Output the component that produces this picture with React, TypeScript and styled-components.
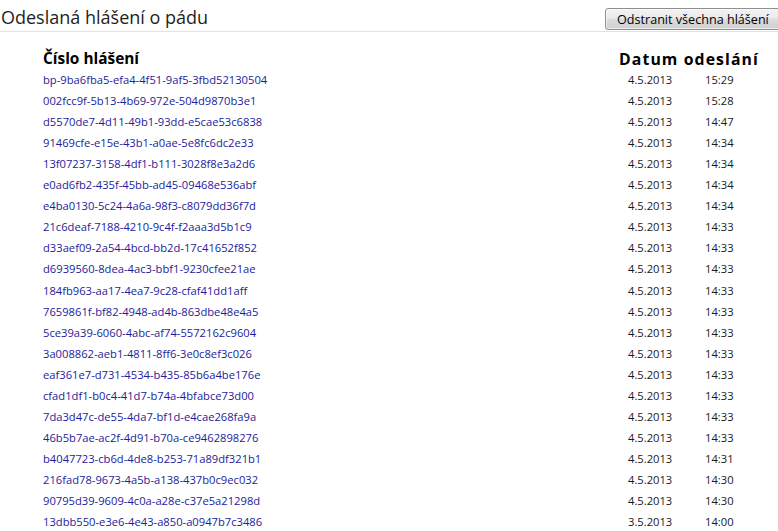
import React from "react";
import styled, { createGlobalStyle } from "styled-components";

const Global = createGlobalStyle`
  html, body { margin: 0; padding: 0; background: #ffffff; }
  body { font-family: "Open Sans", "Liberation Sans", sans-serif; overflow: hidden; }
`;

const Page = styled.div`
  width: 778px;
  height: 531px;
  overflow: hidden;
  background: #fff;
`;

const TopBar = styled.div`
  display: flex;
  align-items: center;
  justify-content: space-between;
  height: 32px;
  border-bottom: 1px solid #e2e2e2;
  box-sizing: border-box;
  padding-left: 1px;
`;

const Title = styled.h1`
  margin: 0;
  font-family: "Open Sans", sans-serif;
  font-weight: 400;
  font-size: 18px;
  color: #1e1e1e;
  line-height: 22px;
  margin-top: 2px;
`;

const ClearButton = styled.button`
  align-self: flex-start;
  margin-top: 8px;
  height: 22px;
  width: 178px;
  margin-right: -5px;
  padding: 0 0 0 11px;
  text-align: left;
  border: 1px solid #8e8f8f;
  border-radius: 3px;
  background: linear-gradient(#f2f2f2 0%, #ebebeb 45%, #dddddd 50%, #cfcfcf 100%);
  font-family: "Open Sans", sans-serif;
  font-size: 12.6px;
  color: #000;
  box-shadow: inset 0 0 0 1px rgba(255,255,255,0.6);
`;

const Table = styled.div`
  display: grid;
  grid-template-columns: 1fr 9px 77px 73px;
  grid-auto-rows: 21.05px;
  padding-left: 43px;
  padding-top: 16px;
`;

const HeadCell = styled.div<{ $wide?: boolean }>`
  grid-column: ${(p) => (p.$wide ? "2 / -1" : "1")};
  font-family: "Open Sans", sans-serif;
  font-weight: 700;
  font-size: ${(p) => (p.$wide ? "15.8px" : "15.4px")};
  letter-spacing: ${(p) => (p.$wide ? "1.1px" : "0")};
  color: #000;
  align-self: center;
  white-space: nowrap;
`;

const IdCell = styled.a`
  grid-column: 1;
  align-self: center;
  font-family: "Open Sans", sans-serif;
  font-size: 11.2px;
  color: #1c1c9c;
  text-decoration: none;
  white-space: nowrap;
`;

const TextCell = styled.div<{ $col: number }>`
  grid-column: ${(p) => p.$col};
  align-self: center;
  font-family: "Open Sans", sans-serif;
  font-size: 11.2px;
  color: #1a1a1a;
  white-space: nowrap;
`;

const rows: [string, string, string][] = [
  ["bp-9ba6fba5-efa4-4f51-9af5-3fbd52130504", "4.5.2013", "15:29"],
  ["002fcc9f-5b13-4b69-972e-504d9870b3e1", "4.5.2013", "15:28"],
  ["d5570de7-4d11-49b1-93dd-e5cae53c6838", "4.5.2013", "14:47"],
  ["91469cfe-e15e-43b1-a0ae-5e8fc6dc2e33", "4.5.2013", "14:34"],
  ["13f07237-3158-4df1-b111-3028f8e3a2d6", "4.5.2013", "14:34"],
  ["e0ad6fb2-435f-45bb-ad45-09468e536abf", "4.5.2013", "14:34"],
  ["e4ba0130-5c24-4a6a-98f3-c8079dd36f7d", "4.5.2013", "14:34"],
  ["21c6deaf-7188-4210-9c4f-f2aaa3d5b1c9", "4.5.2013", "14:33"],
  ["d33aef09-2a54-4bcd-bb2d-17c41652f852", "4.5.2013", "14:33"],
  ["d6939560-8dea-4ac3-bbf1-9230cfee21ae", "4.5.2013", "14:33"],
  ["184fb963-aa17-4ea7-9c28-cfaf41dd1aff", "4.5.2013", "14:33"],
  ["7659861f-bf82-4948-ad4b-863dbe48e4a5", "4.5.2013", "14:33"],
  ["5ce39a39-6060-4abc-af74-5572162c9604", "4.5.2013", "14:33"],
  ["3a008862-aeb1-4811-8ff6-3e0c8ef3c026", "4.5.2013", "14:33"],
  ["eaf361e7-d731-4534-b435-85b6a4be176e", "4.5.2013", "14:33"],
  ["cfad1df1-b0c4-41d7-b74a-4bfabce73d00", "4.5.2013", "14:33"],
  ["7da3d47c-de55-4da7-bf1d-e4cae268fa9a", "4.5.2013", "14:33"],
  ["46b5b7ae-ac2f-4d91-b70a-ce9462898276", "4.5.2013", "14:33"],
  ["b4047723-cb6d-4de8-b253-71a89df321b1", "4.5.2013", "14:31"],
  ["216fad78-9673-4a5b-a138-437b0c9ec032", "4.5.2013", "14:30"],
  ["90795d39-9609-4c0a-a28e-c37e5a21298d", "4.5.2013", "14:30"],
  ["13dbb550-e3e6-4e43-a850-a0947b7c3486", "3.5.2013", "14:00"],
];

export default function App() {
  return (
    <Page>
      <Global />
      <TopBar>
        <Title>Odeslaná hlášení o pádu</Title>
        <ClearButton>Odstranit všechna hlášení</ClearButton>
      </TopBar>
      <Table>
        <HeadCell>Číslo hlášení</HeadCell>
        <HeadCell $wide>Datum odeslání</HeadCell>
        {rows.map(([id, date, time]) => (
          <React.Fragment key={id}>
            <IdCell href="#">{id}</IdCell>
            <TextCell $col={3}>{date}</TextCell>
            <TextCell $col={4}>{time}</TextCell>
          </React.Fragment>
        ))}
      </Table>
    </Page>
  );
}
